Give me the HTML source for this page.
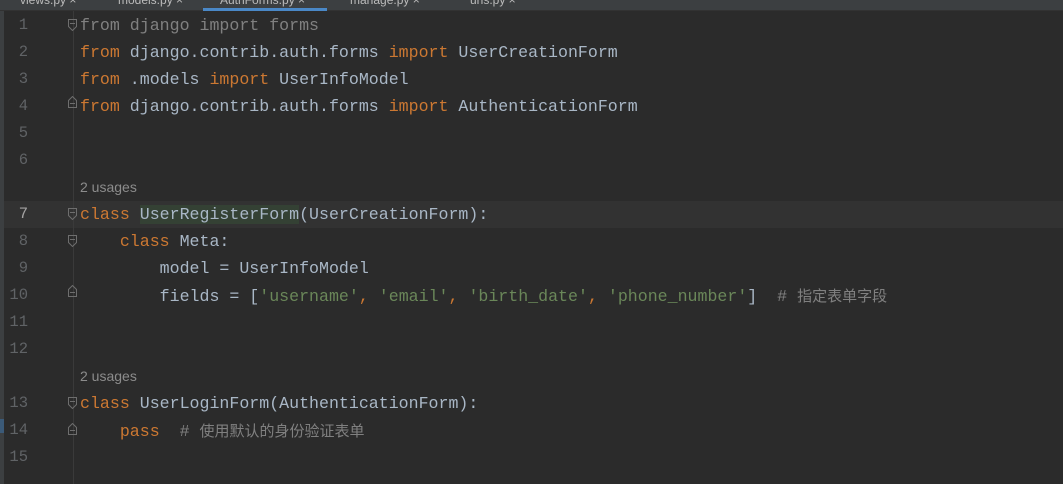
<!DOCTYPE html>
<html><head><meta charset="utf-8"><style>
body{margin:0;width:1063px;height:484px;background:#2b2b2b;overflow:hidden;position:relative;font-family:"Liberation Mono","Noto Sans CJK SC",monospace;font-size:16.6px;color:#a9b7c6}
.tabs{position:absolute;left:0;top:0;width:1063px;height:10px;background:#3c3f41;border-bottom:1px solid #323232}
.tab{position:absolute;top:0;height:10px;font:12px "Liberation Sans",sans-serif;color:#bbb;line-height:0px;overflow:hidden}
.ul{position:absolute;left:203px;top:8px;width:124px;height:3px;background:#4a88c7}
.strip{position:absolute;left:0;top:11px;width:4px;height:473px;background:#3c3f41}
.sep{position:absolute;left:73px;top:11px;width:1px;height:473px;background:#3a3a3a}
.cur{position:absolute;left:4px;top:201px;width:1059px;height:27px;background:#323232}
.ln{position:absolute;left:0;width:28px;text-align:right;color:#606366;line-height:27px;font-size:15.5px}
.c{position:absolute;left:80px;line-height:27px;white-space:pre}
.k{color:#cc7832}.s{color:#6a8759}.g{color:#808080}
.u{position:absolute;left:80px;font:14px "Liberation Sans",sans-serif;color:#8c8c8c;line-height:27px}
.f{position:absolute;left:68px;width:9px;height:12px}
.hl{background:#344134}
.cj{font-family:"Noto Sans CJK SC",sans-serif;font-size:15px}
.mk{position:absolute;left:0;top:419px;width:4px;height:14px;background:#3b5a78}
</style></head><body>
<div class="tabs">
<div class="tab" style="left:20px">views.py ×</div>
<div class="tab" style="left:118px">models.py ×</div>
<div class="tab" style="left:220px">AuthForms.py ×</div>
<div class="tab" style="left:350px">manage.py ×</div>
<div class="tab" style="left:470px">urls.py ×</div>
<div class="ul"></div></div>
<div class="strip"></div><div class="mk"></div>
<div class="cur"></div>
<div class="sep"></div>
<div class="ln" style="top:12px">1</div>
<div class="ln" style="top:39px">2</div>
<div class="ln" style="top:66px">3</div>
<div class="ln" style="top:93px">4</div>
<div class="ln" style="top:120px">5</div>
<div class="ln" style="top:147px">6</div>
<div class="ln" style="top:201px;color:#a4a3a3">7</div>
<div class="ln" style="top:228px">8</div>
<div class="ln" style="top:255px">9</div>
<div class="ln" style="top:282px">10</div>
<div class="ln" style="top:309px">11</div>
<div class="ln" style="top:336px">12</div>
<div class="ln" style="top:390px">13</div>
<div class="ln" style="top:417px">14</div>
<div class="ln" style="top:444px">15</div>
<svg class="f" style="top:19px" viewBox="0 0 9 12"><path d="M0.5 0.5H8.5V7.5L4.5 11.5L0.5 7.5Z M2 4.5H7" fill="none" stroke="#6e6e6e"/></svg>
<svg class="f" style="top:208px" viewBox="0 0 9 12"><path d="M0.5 0.5H8.5V7.5L4.5 11.5L0.5 7.5Z M2 4.5H7" fill="none" stroke="#6e6e6e"/></svg>
<svg class="f" style="top:235px" viewBox="0 0 9 12"><path d="M0.5 0.5H8.5V7.5L4.5 11.5L0.5 7.5Z M2 4.5H7" fill="none" stroke="#6e6e6e"/></svg>
<svg class="f" style="top:397px" viewBox="0 0 9 12"><path d="M0.5 0.5H8.5V7.5L4.5 11.5L0.5 7.5Z M2 4.5H7" fill="none" stroke="#6e6e6e"/></svg>
<svg class="f" style="top:96px" viewBox="0 0 9 12"><path d="M4.5 0.5L8.5 4.5V11.5H0.5V4.5Z M2 7.5H7" fill="none" stroke="#6e6e6e"/></svg>
<svg class="f" style="top:285px" viewBox="0 0 9 12"><path d="M4.5 0.5L8.5 4.5V11.5H0.5V4.5Z M2 7.5H7" fill="none" stroke="#6e6e6e"/></svg>
<svg class="f" style="top:423px" viewBox="0 0 9 12"><path d="M4.5 0.5L8.5 4.5V11.5H0.5V4.5Z M2 7.5H7" fill="none" stroke="#6e6e6e"/></svg>
<div class="c g" style="top:12px">from django import forms</div>
<div class="c" style="top:39px"><span class="k">from</span> django.contrib.auth.forms <span class="k">import</span> UserCreationForm</div>
<div class="c" style="top:66px"><span class="k">from</span> .models <span class="k">import</span> UserInfoModel</div>
<div class="c" style="top:93px"><span class="k">from</span> django.contrib.auth.forms <span class="k">import</span> AuthenticationForm</div>
<div class="u" style="top:174px">2 usages</div>
<div class="c" style="top:201px"><span class="k">class</span> <span class="hl">UserRegisterForm</span>(UserCreationForm):</div>
<div class="c" style="top:228px">    <span class="k">class</span> Meta:</div>
<div class="c" style="top:255px">        model = UserInfoModel</div>
<div class="c" style="top:282px">        fields = [<span class="s">'username'</span><span class="k">,</span> <span class="s">'email'</span><span class="k">,</span> <span class="s">'birth_date'</span><span class="k">,</span> <span class="s">'phone_number'</span>]  <span class="g"># <span class="cj">指定表单字段</span></span></div>
<div class="u" style="top:363px">2 usages</div>
<div class="c" style="top:390px"><span class="k">class</span> UserLoginForm(AuthenticationForm):</div>
<div class="c" style="top:417px">    <span class="k">pass</span>  <span class="g"># <span class="cj">使用默认的身份验证表单</span></span></div>
</body></html>
